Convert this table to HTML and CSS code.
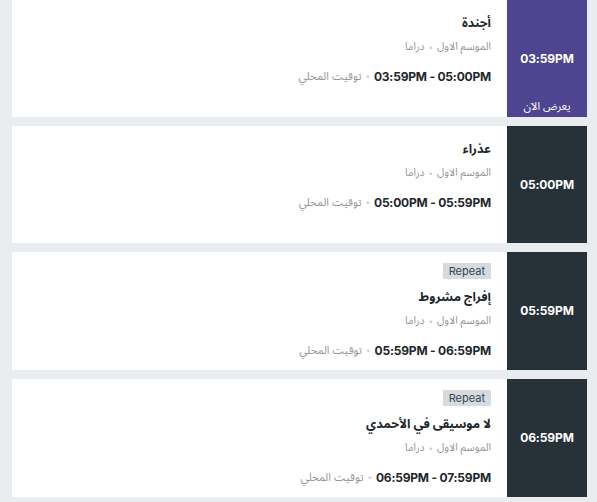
FILE: index.html
```html
<!DOCTYPE html>
<html lang="ar" dir="rtl">
<head>
<meta charset="utf-8">
<title>الجدول</title>
<link rel="stylesheet" href="styles.css">
</head>
<body>
<main class="schedule">
  <article class="card">
    <div class="slot slot-live">
      <span class="slot-spacer"></span>
      <span class="slot-time" dir="ltr">03:59PM</span>
      <span class="slot-live-label">يعرض الآن</span>
    </div>
    <div class="info">
      <h3 class="title">أجندة</h3>
      <p class="meta"><span>الموسم الاول</span><span class="dot">•</span><span>دراما</span></p>
      <p class="range"><span class="range-time" dir="ltr">03:59PM - 05:00PM</span><span class="dot">•</span><span>توقيت المحلي</span></p>
    </div>
  </article>

  <article class="card">
    <div class="slot">
      <span class="slot-spacer"></span>
      <span class="slot-time" dir="ltr">05:00PM</span>
      <span class="slot-spacer"></span>
    </div>
    <div class="info">
      <h3 class="title">عذراء</h3>
      <p class="meta"><span>الموسم الاول</span><span class="dot">•</span><span>دراما</span></p>
      <p class="range"><span class="range-time" dir="ltr">05:00PM - 05:59PM</span><span class="dot">•</span><span>توقيت المحلي</span></p>
    </div>
  </article>

  <article class="card card-tall">
    <div class="slot">
      <span class="slot-spacer"></span>
      <span class="slot-time" dir="ltr">05:59PM</span>
      <span class="slot-spacer"></span>
    </div>
    <div class="info info-badged">
      <span class="badge" dir="ltr">Repeat</span>
      <h3 class="title">إفراج مشروط</h3>
      <p class="meta"><span>الموسم الاول</span><span class="dot">•</span><span>دراما</span></p>
      <p class="range"><span class="range-time" dir="ltr">05:59PM - 06:59PM</span><span class="dot">•</span><span>توقيت المحلي</span></p>
    </div>
  </article>

  <article class="card card-tall">
    <div class="slot">
      <span class="slot-spacer"></span>
      <span class="slot-time" dir="ltr">06:59PM</span>
      <span class="slot-spacer"></span>
    </div>
    <div class="info info-badged">
      <span class="badge" dir="ltr">Repeat</span>
      <h3 class="title">لا موسيقى في الأحمدي</h3>
      <p class="meta"><span>الموسم الاول</span><span class="dot">•</span><span>دراما</span></p>
      <p class="range"><span class="range-time" dir="ltr">06:59PM - 07:59PM</span><span class="dot">•</span><span>توقيت المحلي</span></p>
    </div>
  </article>
</main>
</body>
</html>
```

FILE: styles.css
```css
* { box-sizing: border-box; }

html, body {
  margin: 0;
  padding: 0;
  background: #e9edf0;
  font-family: Inter, "Noto Sans Arabic", "DejaVu Sans", sans-serif;
}

.schedule {
  display: flex;
  flex-direction: column;
  gap: 9px;
  padding: 0 10px 0 12px;
}

.card {
  display: flex;
  height: 117px;
  background: #ffffff;
}

.card-tall { height: 118px; }

.slot {
  flex: 0 0 80px;
  display: grid;
  grid-template-rows: 1fr auto 1fr;
  justify-items: center;
  background: #263238;
  color: #ffffff;
}

.slot-live { background: #4e4490; }

.slot-time {
  font-size: 12px;
  font-weight: 700;
  line-height: 16px;
  letter-spacing: -0.1px;
}

.slot-live-label {
  align-self: end;
  font-size: 11px;
  line-height: 14px;
  padding-bottom: 4px;
}

.info {
  flex: 1;
  display: flex;
  flex-direction: column;
  align-items: flex-start;
  padding: 12px 16px 0;
}

.info-badged { padding-top: 11px; }

.badge {
  height: 16px;
  line-height: 16px;
  padding: 0 6px;
  margin-bottom: 7px;
  background: #d5dbdf;
  color: #37474f;
  font-size: 11px;
}

.title {
  margin: 0;
  height: 22px;
  font-size: 12.5px;
  font-weight: 700;
  line-height: 22px;
  color: #1e272c;
}

.meta,
.range {
  display: flex;
  align-items: center;
  gap: 4px;
  color: #8e979d;
  font-size: 10.5px;
}

.meta {
  margin: 4px 0 0;
  height: 18px;
}

.range {
  margin: 10px 0 0;
  height: 20px;
  font-size: 11px;
}

.range-time {
  font-size: 12px;
  font-weight: 700;
  letter-spacing: -0.2px;
  color: #1e272c;
}

.dot {
  color: #c9cfd3;
  font-size: 8px;
}
```
